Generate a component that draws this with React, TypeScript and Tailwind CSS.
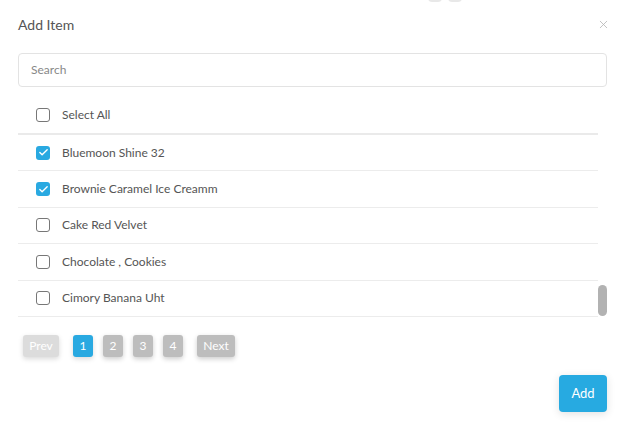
import { X, Check } from "lucide-react";

const items = [
  { name: "Bluemoon Shine 32", checked: true },
  { name: "Brownie Caramel Ice Creamm", checked: true },
  { name: "Cake Red Velvet", checked: false },
  { name: "Chocolate , Cookies", checked: false },
  { name: "Cimory Banana Uht", checked: false },
];

function Box({ checked }: { checked: boolean }) {
  if (checked) {
    return (
      <span className="w-[14px] h-[14px] rounded-[3px] bg-[#29a9e1] flex items-center justify-center">
        <Check size={11} strokeWidth={3} className="text-white" />
      </span>
    );
  }
  return <span className="w-[14px] h-[14px] rounded-[3px] border-[1.5px] border-[#777]" />;
}

export default function App() {
  return (
    <div className="w-[636px] h-[433px] bg-white font-['Lato','Noto_Sans',sans-serif] text-[#555] relative overflow-hidden">
      {/* bits of the page behind the modal */}
      <div className="absolute left-[428px] -top-[4px] w-[42px] h-[6px] flex gap-[6px]">
        <span className="w-[14px] h-full rounded-b bg-[#e8e8e8]" />
        <span className="w-[14px] h-full rounded-b bg-[#e8e8e8]" />
      </div>
      <div className="pl-[18px] pr-[29px] pt-[15px]">
        <div className="flex items-center justify-between h-[18px]">
          <h2 className="text-[14px] text-[#555]">Add Item</h2>
          <X size={13} strokeWidth={1.5} className="text-[#b5b5b5] -mr-[3px]" />
        </div>
        <div className="mt-[20px] h-[34px] border border-[#e3e3e3] rounded-[4px] flex items-center px-[12px] text-[12px] text-[#888]">
          Search
        </div>
        <div className="mt-[10px] flex">
          <div className="flex-1">
            <div className="h-[38px] border-b-2 border-[#eaeaea] flex items-center pl-[18px] gap-[12px] text-[12px]">
              <Box checked={false} />
              <span>Select All</span>
            </div>
            {items.map((it) => (
              <div
                key={it.name}
                className="h-[36.4px] border-b border-[#ececec] flex items-center pl-[18px] gap-[12px] text-[12px]"
              >
                <Box checked={it.checked} />
                <span>{it.name}</span>
              </div>
            ))}
          </div>
          <div className="w-[9px] flex flex-col justify-end">
            <div className="h-[31px] rounded-full bg-[#b2b2b2] mb-[1px]" />
          </div>
        </div>
        <div className="mt-[18px] flex items-center pl-[5px] text-[12px] text-white">
          <span className="h-[22px] w-[36px] rounded-[3px] bg-[#dcdcdc] flex items-center justify-center shadow-[0_2px_5px_rgba(0,0,0,0.15)]">
            Prev
          </span>
          <div className="flex gap-[10px] ml-[14px]">
            <span className="h-[22px] w-[20px] rounded-[3px] bg-[#29a9e1] flex items-center justify-center shadow-[0_2px_5px_rgba(0,0,0,0.15)]">1</span>
            <span className="h-[22px] w-[20px] rounded-[3px] bg-[#bdbdbd] flex items-center justify-center shadow-[0_2px_5px_rgba(0,0,0,0.2)]">2</span>
            <span className="h-[22px] w-[20px] rounded-[3px] bg-[#bdbdbd] flex items-center justify-center shadow-[0_2px_5px_rgba(0,0,0,0.2)]">3</span>
            <span className="h-[22px] w-[20px] rounded-[3px] bg-[#bdbdbd] flex items-center justify-center shadow-[0_2px_5px_rgba(0,0,0,0.2)]">4</span>
          </div>
          <span className="ml-[14px] h-[22px] w-[38px] rounded-[3px] bg-[#bdbdbd] flex items-center justify-center shadow-[0_2px_5px_rgba(0,0,0,0.2)]">
            Next
          </span>
        </div>
        <div className="mt-[18px] flex justify-end">
          <button className="w-[48px] h-[37px] rounded-[4px] bg-[#27aae1] text-white text-[13px] shadow-[0_2px_8px_rgba(0,0,0,0.12)]">
            Add
          </button>
        </div>
      </div>
    </div>
  );
}
